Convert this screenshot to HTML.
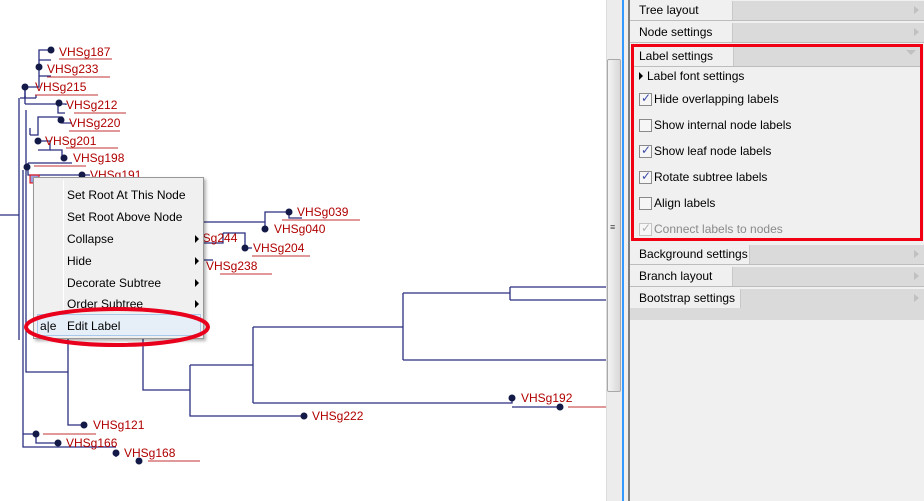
<!DOCTYPE html>
<html><head><meta charset="utf-8"><style>
*{margin:0;padding:0;box-sizing:border-box}
body{width:924px;height:501px;overflow:hidden;background:#fff;font-family:"Liberation Sans",Arial,sans-serif;position:relative}
.lbl{position:absolute;font-size:12px;color:#b00000;line-height:14px;white-space:nowrap}
#menu{position:absolute;left:33px;top:177px;width:171px;height:162px;background:#f0f0f0;border:1px solid #979797;box-shadow:2px 2px 3px rgba(0,0,0,.3)}
#menu .sep{position:absolute;left:29px;top:2px;bottom:2px;width:1px;background:#e0e0e0;border-right:1px solid #fff}
.mi{position:absolute;left:33px;font-size:12px;color:#000;line-height:14px}
.ar{position:absolute;left:161px;width:0;height:0;border-top:4px solid transparent;border-bottom:4px solid transparent;border-left:4px solid #000}
#panel{position:absolute;left:630px;top:0;width:294px;height:501px;background:#f0f0f0}
.hdr{position:absolute;left:0;width:294px;height:20px;background:#dadada;border-bottom:1px solid #bdbdbd}
.hdr .tab{position:absolute;left:0;top:0;height:19px;background:#f0f0f0;border-right:1px solid #c8c8c8;font-size:12px;line-height:19px;padding-left:9px;color:#000}
.hdr .tri{position:absolute;right:5px;top:5px;width:0;height:0;border-top:4px solid transparent;border-bottom:4px solid transparent;border-left:5px solid #c0c0c0}
.cb{position:absolute;left:9px;width:13px;height:13px;border:1px solid #8a8a8a;background:#f6f6f6}
.cbt{position:absolute;left:24px;font-size:12px;line-height:14px;color:#000}
</style></head><body>
<svg width="606" height="501" style="position:absolute;left:0;top:0">
<g stroke="#2a2f80" stroke-width="1.3" fill="none">
<path d="M0,215H19M19,98V340M20,98H25V87M23,170V447H116M26,110V372H68M26,372H68M68,337V425H84"/>
<path d="M25,87H39V50H51M39,60H51M39,67V76H51M25,87V98H36M36,98V95"/>
<path d="M25,104H66V105M58,104V113H65M25,104V96"/>
<path d="M30,135H38V117H62V123H72M38,141H50V150M38,150H62V158M30,135V128"/>
<path d="M28,163H72M28,163V175H90"/>
<path d="M203,222H265V212H289M265,222V229M289,212V218H302"/>
<path d="M203,243H223V233M223,233H245V248M245,248H252"/>
<path d="M203,260H213"/>
<path d="M143,338V390H190M190,365V416H304M190,365H253M253,327V403M253,327H403M403,293V360M403,293H510M510,287V300M510,287H606M510,300H606M403,360H606M253,403H512V398M512,407H560"/>
<path d="M36,434V443H58M36,434H23"/>
<path d="M116,453V457"/>
</g>
<g fill="#141a48">
<circle cx="51" cy="50" r="3.5"/><circle cx="39" cy="67" r="3.5"/><circle cx="25" cy="87" r="3.5"/>
<circle cx="59" cy="103" r="3.5"/><circle cx="61" cy="120" r="3.5"/><circle cx="38" cy="141" r="3.5"/>
<circle cx="64" cy="158" r="3.5"/><circle cx="27" cy="167" r="3.5"/><circle cx="82" cy="175" r="3.5"/>
<circle cx="289" cy="212" r="3.5"/><circle cx="265" cy="229" r="3.5"/><circle cx="245" cy="248" r="3.5"/>
<circle cx="304" cy="416" r="3.5"/><circle cx="512" cy="398" r="3.5"/><circle cx="560" cy="407" r="3.5"/>
<circle cx="84" cy="425" r="3.5"/><circle cx="36" cy="434" r="3.5"/><circle cx="58" cy="443" r="3.5"/>
<circle cx="116" cy="453" r="3.5"/><circle cx="139" cy="461" r="3.5"/>
</g>
<g stroke="#c03030" stroke-width="1">
<path d="M59,59H112M47,77H110M35,95H98M74,113H126M69,131H120M66,148H118M34,166H86M300,220H360M252,256H310M220,274H272M568,407H606M43,434H96M148,461H200M282,220H301"/>
</g>
<rect x="30" y="175" width="9" height="8" fill="#9aa0e0" stroke="#e00" stroke-width="1"/>
</svg>
<div class="lbl" style="left:59px;top:45px">VHSg187</div>
<div class="lbl" style="left:47px;top:62px">VHSg233</div>
<div class="lbl" style="left:35px;top:80px">VHSg215</div>
<div class="lbl" style="left:66px;top:98px">VHSg212</div>
<div class="lbl" style="left:69px;top:116px">VHSg220</div>
<div class="lbl" style="left:45px;top:134px">VHSg201</div>
<div class="lbl" style="left:73px;top:151px">VHSg198</div>
<div class="lbl" style="left:90px;top:168px">VHSg191</div>
<div class="lbl" style="left:297px;top:205px">VHSg039</div>
<div class="lbl" style="left:274px;top:222px">VHSg040</div>
<div class="lbl" style="left:186px;top:231px">VHSg244</div>
<div class="lbl" style="left:253px;top:241px">VHSg204</div>
<div class="lbl" style="left:206px;top:259px">VHSg238</div>
<div class="lbl" style="left:312px;top:409px">VHSg222</div>
<div class="lbl" style="left:521px;top:391px">VHSg192</div>
<div class="lbl" style="left:93px;top:418px">VHSg121</div>
<div class="lbl" style="left:66px;top:436px">VHSg166</div>
<div class="lbl" style="left:124px;top:446px">VHSg168</div>
<div id="menu">
<div class="sep"></div>
<div class="mi" style="top:10px">Set Root At This Node</div>
<div class="mi" style="top:32px">Set Root Above Node</div>
<div class="mi" style="top:54px">Collapse</div><div class="ar" style="top:57px"></div>
<div class="mi" style="top:76px">Hide</div><div class="ar" style="top:79px"></div>
<div class="mi" style="top:98px">Decorate Subtree</div><div class="ar" style="top:101px"></div>
<div class="mi" style="top:119px">Order Subtree</div><div class="ar" style="top:122px"></div>
<div style="position:absolute;left:3px;top:136px;width:164px;height:22px;background:#e6eef8;border:1px solid #a8c8ec"></div>
<div class="mi" style="left:6px;top:141px;font-size:12px">a|e</div>
<div class="mi" style="top:141px">Edit Label</div>
</div>
<svg width="230" height="60" style="position:absolute;left:20px;top:297px"><ellipse cx="97" cy="30" rx="91" ry="18" fill="none" stroke="#e8001c" stroke-width="4"/></svg>
<div style="position:absolute;left:606px;top:0;width:16px;height:501px;background:#ececec;border-left:1px solid #dcdcdc"></div>
<div style="position:absolute;left:607px;top:59px;width:14px;height:333px;background:linear-gradient(90deg,#f4f4f4,#d8d8d8);border:1px solid #a8a8a8;border-radius:2px"></div>
<div style="position:absolute;left:610px;top:222px;font-size:9px;color:#444">≡</div>
<div style="position:absolute;left:622px;top:0;width:2px;height:501px;background:#3399ff"></div>
<div style="position:absolute;left:624px;top:0;width:4px;height:501px;background:#f0f0f0"></div>
<div style="position:absolute;left:628px;top:0;width:2px;height:501px;background:#808080"></div>
<div id="panel">
<div class="hdr" style="top:1px"><div class="tab" style="width:103px">Tree layout</div><div class="tri"></div></div>
<div class="hdr" style="top:23px"><div class="tab" style="width:103px">Node settings</div><div class="tri"></div></div>
<div style="position:absolute;left:1px;top:44px;width:292px;height:197px;border:3px solid #f00012"></div>
<div class="hdr" style="top:47px;left:4px;width:286px"><div class="tab" style="width:100px;padding-left:5px">Label settings</div></div>
<div style="position:absolute;right:8px;top:50px;width:0;height:0;border-left:5px solid transparent;border-right:5px solid transparent;border-top:5px solid #c0c0c0"></div>
<div style="position:absolute;left:9px;top:72px;width:0;height:0;border-top:4px solid transparent;border-bottom:4px solid transparent;border-left:4px solid #000"></div>
<div class="cbt" style="left:17px;top:69px">Label font settings</div>
<div class="cb" style="top:93px"><span style="position:absolute;left:1px;top:-3px;font-size:12px;color:#3a4aa8">✓</span></div><div class="cbt" style="top:92px">Hide overlapping labels</div>
<div class="cb" style="top:119px"></div><div class="cbt" style="top:118px">Show internal node labels</div>
<div class="cb" style="top:145px"><span style="position:absolute;left:1px;top:-3px;font-size:12px;color:#3a4aa8">✓</span></div><div class="cbt" style="top:144px">Show leaf node labels</div>
<div class="cb" style="top:171px"><span style="position:absolute;left:1px;top:-3px;font-size:12px;color:#3a4aa8">✓</span></div><div class="cbt" style="top:170px">Rotate subtree labels</div>
<div class="cb" style="top:197px"></div><div class="cbt" style="top:196px">Align labels</div>
<div class="cb" style="top:223px;border-color:#c4c4c4"><span style="position:absolute;left:1px;top:-3px;font-size:12px;color:#b0b0b0">✓</span></div><div class="cbt" style="top:222px;color:#8a8a8a">Connect labels to nodes</div>
<div class="hdr" style="top:245px"><div class="tab" style="width:120px">Background settings</div><div class="tri"></div></div>
<div class="hdr" style="top:267px"><div class="tab" style="width:103px">Branch layout</div><div class="tri"></div></div>
<div class="hdr" style="top:289px"><div class="tab" style="width:111px">Bootstrap settings</div><div class="tri"></div></div>
<div style="position:absolute;left:0;top:308px;width:294px;height:12px;background:#dadada"></div>
</div>
</body></html>
